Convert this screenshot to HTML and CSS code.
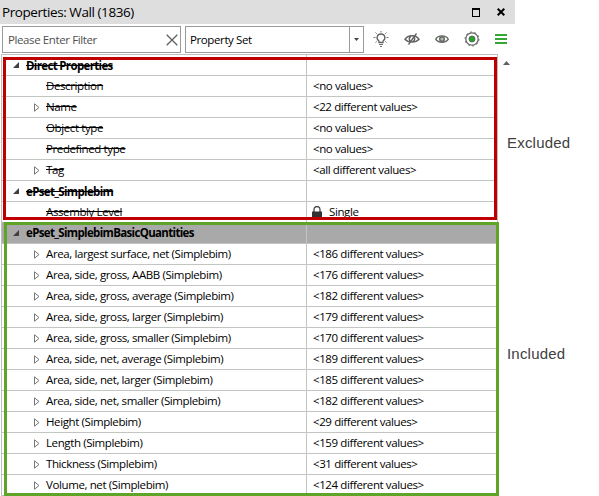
FILE: index.html
```html
<!DOCTYPE html>
<html lang="en">
<head>
<meta charset="utf-8">
<title>Properties</title>
<link rel="stylesheet" href="styles.css">
</head>
<body>
<div class="page">
<div class="panel">
<div class="titlebar">
<span class="title">Properties: Wall (1836)</span>
<svg class="max" width="8" height="9"><path d="M0 1h8M.5 1v8M7.5 1v8M0 8.5h8" fill="none" stroke="#000"/><path d="M0 1h8" stroke="#000" stroke-width="2"/></svg>
<svg class="close" width="8" height="8"><path d="M.7.7l6.6 6.6M7.3.7L.7 7.3" stroke="#000" stroke-width="2"/></svg>
</div>
<div class="toolbar">
<div class="filter"><span>Please Enter Filter</span><svg width="12" height="12"><path d="M.7.7l10.6 10.6M11.3.7L.7 11.3" stroke="#606060" stroke-width="1.3"/></svg></div>
<div class="combo"><span>Property Set</span><i class="drop"><svg width="5" height="3"><path d="M0 0h5L2.500 3z" fill="#444"/></svg></i></div>
<div class="icons">
<svg width="16" height="17" fill="none" stroke="#606060"><path d="M6 11.500V10C2.600 7.500 4 3 8 3s5.400 4.500 2 7v1.500z" stroke-width="1.300"/><path d="M6 13.500h4M7 15.500h2M8 0v1.500M2.500 1.500l1.200 1.200M13.500 1.500l-1.200 1.200M.5 6.500h2M13.500 6.500h2M2.500 11.500l1.200-1.200M13.500 11.500l-1.200-1.200" stroke-width=".9"/></svg>
<svg width="16" height="12" fill="none" stroke="#606060"><path d="M1 6.300C4 1.600 12 1.600 15 6.300C12 10 4 10 1 6.300z" stroke-width="1.500"/><path d="M6.800 3.500c-2 1-2 4 0 5M9.500 4c1.800 1 1.500 3.500-.5 4.500" stroke-width="1.500"/><path d="M12.500.5l-8 11" stroke-width="1.300"/></svg>
<svg width="14" height="10" fill="none" stroke="#666"><path d="M.7 5.200C3 .8 11 .8 13.300 5.200C11 9.200 3 9.200.7 5.200z" stroke-width="1.400"/><circle cx="7" cy="5" r="2.300" fill="#a5c0a5" stroke-width="1.400"/></svg>
<svg width="16" height="16" fill="none"><circle cx="8" cy="8" r="6.200" stroke="#666" stroke-width="1.300"/><circle cx="8" cy="8" r="7" stroke="#777" stroke-width="1" stroke-dasharray="2 2.400"/><circle cx="8" cy="8" r="3" fill="#26a32b" stroke="#52705a"/></svg>
<svg width="12" height="10" fill="#36a635"><path d="M0 0h12v2H0zM0 4h12v2H0zM0 8h12v2H0z"/></svg>
</div>
</div>
<div class="body">
<div class="grid">
<div class="row group off"><div class="name"><i class="open"></i><span>Direct Properties</span></div><div class="value"></div></div>
<div class="row off"><div class="name"><span>Description</span></div><div class="value">&lt;no values&gt;</div></div>
<div class="row off"><div class="name"><svg class="arrow" width="6" height="9"><path d="M.5.8v7.400L5 4.500z"/></svg><span>Name</span></div><div class="value">&lt;22 different values&gt;</div></div>
<div class="row off"><div class="name"><span>Object type</span></div><div class="value">&lt;no values&gt;</div></div>
<div class="row off"><div class="name"><span>Predefined type</span></div><div class="value">&lt;no values&gt;</div></div>
<div class="row off"><div class="name"><svg class="arrow" width="6" height="9"><path d="M.5.8v7.400L5 4.500z"/></svg><span>Tag</span></div><div class="value">&lt;all different values&gt;</div></div>
<div class="row group off"><div class="name"><i class="open"></i><span>ePset_Simplebim</span></div><div class="value"></div></div>
<div class="row off last"><div class="name"><span>Assembly Level</span></div><div class="value locked"><svg width="10" height="12"><path d="M2 6V3.500a3 3 0 0 1 6 0V6" fill="none" stroke="#444" stroke-width="1.300"/><path d="M0 5.500h10V12H0z" fill="#333"/></svg>Single</div></div>
<div class="row group selected"><div class="name"><i class="open"></i><span>ePset_SimplebimBasicQuantities</span></div><div class="value"></div></div>
<div class="row"><div class="name"><svg class="arrow" width="6" height="9"><path d="M.5.8v7.400L5 4.500z"/></svg><span>Area, largest surface, net (Simplebim)</span></div><div class="value">&lt;186 different values&gt;</div></div>
<div class="row"><div class="name"><svg class="arrow" width="6" height="9"><path d="M.5.8v7.400L5 4.500z"/></svg><span>Area, side, gross, AABB (Simplebim)</span></div><div class="value">&lt;176 different values&gt;</div></div>
<div class="row"><div class="name"><svg class="arrow" width="6" height="9"><path d="M.5.8v7.400L5 4.500z"/></svg><span>Area, side, gross, average (Simplebim)</span></div><div class="value">&lt;182 different values&gt;</div></div>
<div class="row"><div class="name"><svg class="arrow" width="6" height="9"><path d="M.5.8v7.400L5 4.500z"/></svg><span>Area, side, gross, larger (Simplebim)</span></div><div class="value">&lt;179 different values&gt;</div></div>
<div class="row"><div class="name"><svg class="arrow" width="6" height="9"><path d="M.5.8v7.400L5 4.500z"/></svg><span>Area, side, gross, smaller (Simplebim)</span></div><div class="value">&lt;170 different values&gt;</div></div>
<div class="row"><div class="name"><svg class="arrow" width="6" height="9"><path d="M.5.8v7.400L5 4.500z"/></svg><span>Area, side, net, average (Simplebim)</span></div><div class="value">&lt;189 different values&gt;</div></div>
<div class="row"><div class="name"><svg class="arrow" width="6" height="9"><path d="M.5.8v7.400L5 4.500z"/></svg><span>Area, side, net, larger (Simplebim)</span></div><div class="value">&lt;185 different values&gt;</div></div>
<div class="row"><div class="name"><svg class="arrow" width="6" height="9"><path d="M.5.8v7.400L5 4.500z"/></svg><span>Area, side, net, smaller (Simplebim)</span></div><div class="value">&lt;182 different values&gt;</div></div>
<div class="row"><div class="name"><svg class="arrow" width="6" height="9"><path d="M.5.8v7.400L5 4.500z"/></svg><span>Height (Simplebim)</span></div><div class="value">&lt;29 different values&gt;</div></div>
<div class="row"><div class="name"><svg class="arrow" width="6" height="9"><path d="M.5.8v7.400L5 4.500z"/></svg><span>Length (Simplebim)</span></div><div class="value">&lt;159 different values&gt;</div></div>
<div class="row"><div class="name"><svg class="arrow" width="6" height="9"><path d="M.5.8v7.400L5 4.500z"/></svg><span>Thickness (Simplebim)</span></div><div class="value">&lt;31 different values&gt;</div></div>
<div class="row"><div class="name"><svg class="arrow" width="6" height="9"><path d="M.5.8v7.400L5 4.500z"/></svg><span>Volume, net (Simplebim)</span></div><div class="value">&lt;124 different values&gt;</div></div>
</div>
<svg class="up" width="7" height="4"><path d="M0 4h7L3.500 0z" fill="#606060"/></svg>
</div>
</div>
<div class="notes">
<div class="note">Excluded</div>
<div class="note">Included</div>
</div>
<!-- frames over the grid -->
<div class="frame red"></div>
<div class="frame green"></div>
</div>
</body>
</html>
```
FILE: styles.css
```css
* {box-sizing:border-box}
body {
margin:0;
background:#fff;
color:#000;
font-family:"Open Sans","Noto Sans",sans-serif;
font-size:11.5px;
letter-spacing:-.39px;
}
svg {display:block;flex:none}
.page {
position:relative;
display:flex;
width:599px;height:496px;
overflow:hidden;
}
.panel {width:515px;flex:none}
.titlebar {
display:flex;align-items:center;
height:24px;
padding:0 10px 0 2px;
background:#dedede;
}
.title {flex:1;font-size:13.5px;line-height:22px;letter-spacing:-.42px}
.max {margin-right:17px}
.toolbar {
display:flex;
height:30px;
padding:2px 0 0 2px;
}
.filter, .combo {
display:flex;align-items:center;
height:27px;
border:1px solid #9a9a9a;
white-space:nowrap;
}
.filter {
width:179px;
margin-right:4px;
padding:0 2px 0 5px;
justify-content:space-between;
color:#505050;
}
.combo {
width:179px;
padding-left:4px;
justify-content:space-between;
}
.drop {
display:flex;align-items:center;justify-content:center;
width:14px;height:25px;
border-left:1px solid #9a9a9a;
}
.icons {
display:flex;align-items:center;justify-content:space-between;
width:134px;height:26px;
margin-left:9px;
}
.body {display:flex;align-items:flex-start}
.grid {
width:497px;
margin-left:1px;
border:1px solid #bdc0bd;
border-width:1px 1px 0 1px;
}
.row {
display:flex;
height:21px;
border-bottom:1px solid #c1c6c1;
line-height:20px;
white-space:nowrap;
}
.name {
display:flex;align-items:center;
width:305px;
padding-left:44px;
border-right:1px solid #c1c6c1;
}
.value {padding-left:6px}
.arrow {margin:0 6px 0 -12px}
.arrow path {fill:#fff;stroke:#777;stroke-width:1}
.off .name span {text-decoration:line-through}
.group .name {
padding-left:11px;
font-weight:bold;
letter-spacing:-.66px;
}
.group .name span {padding-top:1px}
.open {
width:0;height:0;
margin-right:7px;
border-left:6px solid transparent;
border-bottom:6px solid #404040;
}
.last {height:20px;border-bottom:0}
.selected {height:22px;background:#a9a9a9}
.locked {display:flex;align-items:center;padding-left:5px}
.locked svg {margin-right:7px}
.up {margin:7px 0 0 5px}
.notes {
display:flex;flex-direction:column;
gap:193px;
padding-top:134px;
margin-left:-8px;
}
.note {
font:15px/18px "Liberation Sans",Arial,sans-serif;
letter-spacing:.2px;
color:#404040;
}
.frame {position:absolute;border:3px solid}
.red {left:3px;top:57px;width:494px;height:163px;border-color:#c00000}
.green {left:4px;top:222px;width:495px;height:274px;border-color:#5ea427}
```
